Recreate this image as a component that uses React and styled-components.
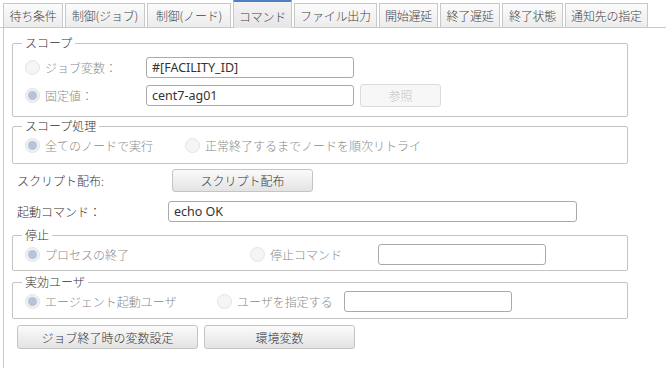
import React from "react";
import styled, { createGlobalStyle, css } from "styled-components";

const Global = createGlobalStyle`
  html, body { margin: 0; padding: 0; background: #fff; }
  body { font-family: "Noto Sans CJK JP", "Noto Sans", sans-serif; font-size: 12px; color: #333; }
  * { box-sizing: border-box; }
`;

const Page = styled.div`
  width: 666px;
  height: 368px;
  overflow: hidden;
  font-weight: 300;
`;

const TabBar = styled.div`
  display: flex;
  align-items: flex-end;
  gap: 2px;
  height: 28px;
  padding-left: 3px;
  border-bottom: 1px solid #c8c8c8;
`;

const Tab = styled.div`
  width: ${(p) => p.$w}px;
  flex-shrink: 0;
  height: 24px;
  display: flex;
  align-items: center;
  justify-content: center;
  border: 1px solid #c8c8c8;
  border-bottom: none;
  background: linear-gradient(#fbfbfb, #ececec);
  color: #444;
  font-size: 12px;
  white-space: nowrap;
  letter-spacing: -0.2px;
  ${(p) =>
    p.$active &&
    css`
      border-top: 3px solid #4f7fc4;
      background: linear-gradient(#f3f3f3, #e6e6e6);
      margin-bottom: -1px;
      height: 29px;
      padding-top: 2px;
    `}
`;

const Panel = styled.div`
  margin-left: 3px;
  border-left: 1px solid #c8c8c8;
  height: 340px;
  padding: 8px 38px 0 8px;
  display: flex;
  flex-direction: column;
`;

const Group = styled.fieldset`
  margin: 0 0 ${(p) => p.$mb || 0}px 0;
  padding: ${(p) => p.$pt || 0}px 0 ${(p) => p.$pb || 4}px 0;
  border: 1px solid #c4c4c4;
  border-radius: 2px;
  min-width: 0;
`;

const Legend = styled.legend`
  padding: 0 3px;
  margin-left: 9px;
  font-size: 12px;
  line-height: 14px;
  color: #333;
`;

const Row = styled.div`
  display: flex;
  align-items: center;
  height: ${(p) => p.$h || 28}px;
  padding-left: ${(p) => p.$pl || 0}px;
`;

const RadioItem = styled.label`
  display: flex;
  align-items: center;
  gap: 5px;
  color: #8a8a8a;
  font-size: 12px;
  width: ${(p) => (p.$w ? `${p.$w}px` : "auto")};
  flex-shrink: 0;
`;

const RadioDot = styled.span`
  width: 15px;
  height: 15px;
  border-radius: 50%;
  border: 1px solid #e4e4e4;
  background: #f5f5f5;
  display: inline-flex;
  align-items: center;
  justify-content: center;
  flex-shrink: 0;
  ${(p) =>
    p.$checked &&
    css`
      background: #eef0f4;
      &::after {
        content: "";
        width: 9px;
        height: 9px;
        border-radius: 50%;
        background: #b7c4d7;
      }
    `}
`;

const TextBox = styled.div`
  width: ${(p) => p.$w}px;
  height: 21px;
  border: 1px solid #aaa;
  border-radius: 3px;
  padding: 0 5px;
  display: flex;
  align-items: center;
  font-family: "Noto Sans", "Noto Sans CJK JP", sans-serif;
  font-weight: 400;
  font-size: 12.5px;
  color: #333;
  flex-shrink: 0;
`;

const Button = styled.div`
  width: ${(p) => p.$w}px;
  height: ${(p) => p.$h || 23}px;
  margin-left: ${(p) => p.$ml || 0}px;
  border: 1px solid #c4c4c4;
  border-radius: 3px;
  background: linear-gradient(#fbfbfb, #e3e3e3);
  color: #333;
  display: flex;
  align-items: center;
  justify-content: center;
  font-size: 12px;
  flex-shrink: 0;
  ${(p) =>
    p.$disabled &&
    css`
      background: #f7f7f7;
      border-color: #dcdcdc;
      color: #c2c2c2;
    `}
`;

const FieldLabel = styled.span`
  width: ${(p) => p.$w}px;
  flex-shrink: 0;
  color: #333;
  font-size: 12px;
  padding-left: 5px;
`;

const Buttons = styled.div`
  display: flex;
  gap: 6px;
  padding-left: 5px;
  margin-top: 6px;
`;

const Radio = ({ checked, w, children }) => (
  <RadioItem $w={w}>
    <RadioDot $checked={checked} />
    {children}
  </RadioItem>
);

const tabs = [
  ["待ち条件", 60],
  ["制御(ジョブ)", 80],
  ["制御(ノード)", 84],
  ["コマンド", 59],
  ["ファイル出力", 83],
  ["開始遅延", 59],
  ["終了遅延", 60],
  ["終了状態", 61],
  ["通知先の指定", 83],
];

export default function App() {
  return (
    <Page>
      <Global />
      <TabBar>
        {tabs.map(([t, w]) => (
          <Tab key={t} $w={w} $active={t === "コマンド"}>
            {t}
          </Tab>
        ))}
      </TabBar>
      <Panel>
        <Group $mb={2} $pt={3} $pb={7}>
          <Legend>スコープ</Legend>
          <Row $h={28} $pl={12}>
            <Radio w={121}>ジョブ変数：</Radio>
            <TextBox $w={208}>#[FACILITY_ID]</TextBox>
          </Row>
          <Row $h={28} $pl={12}>
            <Radio checked w={121}>固定値：</Radio>
            <TextBox $w={208}>cent7-ag01</TextBox>
            <Button $w={81} $ml={6} $disabled>参照</Button>
          </Row>
        </Group>
        <Group $mb={2} $pt={0} $pb={6}>
          <Legend>スコープ処理</Legend>
          <Row $h={24} $pl={12}>
            <Radio checked w={160}>全てのノードで実行</Radio>
            <Radio>正常終了するまでノードを順次リトライ</Radio>
          </Row>
        </Group>
        <Row $h={28}>
          <FieldLabel $w={160}>スクリプト配布:</FieldLabel>
          <Button $w={141}>スクリプト配布</Button>
        </Row>
        <Row $h={34}>
          <FieldLabel $w={156}>起動コマンド：</FieldLabel>
          <TextBox $w={409}>echo OK</TextBox>
        </Row>
        <Group $mb={4} $pt={0} $pb={4}>
          <Legend>停止</Legend>
          <Row $h={24} $pl={12}>
            <Radio checked w={225}>プロセスの終了</Radio>
            <Radio w={128}>停止コマンド</Radio>
            <TextBox $w={168} />
          </Row>
        </Group>
        <Group $mb={0} $pt={0} $pb={5}>
          <Legend>実効ユーザ</Legend>
          <Row $h={24} $pl={12}>
            <Radio checked w={192}>エージェント起動ユーザ</Radio>
            <Radio w={127}>ユーザを指定する</Radio>
            <TextBox $w={168} />
          </Row>
        </Group>
        <Buttons>
          <Button $w={181} $h={24}>ジョブ終了時の変数設定</Button>
          <Button $w={151} $h={24}>環境変数</Button>
        </Buttons>
      </Panel>
    </Page>
  );
}
